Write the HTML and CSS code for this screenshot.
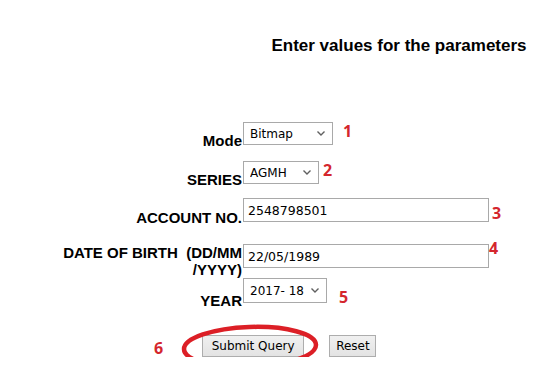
FILE: index.html
```html
<!DOCTYPE html>
<html lang="en">
  <head>
    <meta charset="UTF-8" />
    <title>Enter values for the parameters</title>
    <link rel="stylesheet" href="styles.css">
  </head>
  <body>
    <form class="params" name="paramForm" onsubmit="return false">
      <h3 class="title">Enter values for the parameters</h3>

      <div class="row row-mode">
        <label class="label" for="mode">Mode</label>
        <span class="pick pick-mode">
          <select id="mode" name="mode">
            <option>Bitmap</option>
            <option>PDF</option>
          </select>
          <svg class="chev" width="8" height="5" viewBox="0 0 8 5"><path d="M0.5 0.5 L4 4 L7.5 0.5" /></svg>
        </span>
        <span class="mark mark-1">1</span>
      </div>

      <div class="row row-series">
        <label class="label" for="series">SERIES</label>
        <span class="pick pick-series">
          <select id="series" name="series">
            <option>AGMH</option>
          </select>
          <svg class="chev" width="8" height="5" viewBox="0 0 8 5"><path d="M0.5 0.5 L4 4 L7.5 0.5" /></svg>
        </span>
        <span class="mark mark-2">2</span>
      </div>

      <div class="row row-account">
        <label class="label" for="account">ACCOUNT NO.</label>
        <input class="field" id="account" name="account" type="text" value="2548798501" />
        <span class="mark mark-3">3</span>
      </div>

      <div class="row row-dob">
        <label class="label label-top" for="dob">DATE OF BIRTH&nbsp; (DD/MM<br />/YYYY)</label>
        <input class="field" id="dob" name="dob" type="text" value="22/05/1989" />
        <span class="mark mark-4">4</span>
      </div>

      <div class="row row-year">
        <label class="label" for="year">YEAR</label>
        <span class="pick pick-year">
          <select id="year" name="year">
            <option>2017- 18</option>
            <option>2016- 17</option>
          </select>
          <svg class="chev" width="8" height="5" viewBox="0 0 8 5"><path d="M0.5 0.5 L4 4 L7.5 0.5" /></svg>
        </span>
        <span class="mark mark-5">5</span>
      </div>

      <div class="actions">
        <span class="mark mark-6">6</span>
        <button class="btn btn-submit" type="submit">Submit Query</button>
        <button class="btn btn-reset" type="reset">Reset</button>
        <svg class="ring" width="140" height="46" viewBox="0 0 140 46">
          <ellipse cx="70" cy="23" rx="66" ry="20" transform="rotate(-2 70 23)" />
        </svg>
      </div>
    </form>
  </body>
</html>
```

FILE: styles.css
```css
body {
  margin: 0;
  background: #ffffff;
  font-family: 'Liberation Sans', Arial, sans-serif;
  color: #000000;
}
.params {
  display: flex;
  flex-direction: column;
  width: 556px;
}
.title {
  margin: 36px 0 0 242px;
  width: 314px;
  text-align: center;
  font-size: 17px;
  line-height: 19px;
  font-weight: bold;
}
.row {
  display: flex;
  align-items: flex-start;
}
.label {
  flex: 0 0 242px;
  align-self: flex-end;
  margin-bottom: -4px;
  text-align: right;
  font-size: 15px;
  line-height: 17px;
  font-weight: bold;
  white-space: nowrap;
}
.label-top {
  align-self: flex-start;
  margin-bottom: 0;
}
.row-mode {
  margin-top: 67px;
}
.row-series {
  margin-top: 16px;
}
.row-account {
  margin-top: 14px;
}
.row-dob {
  margin-top: 22px;
}
.row-year {
  margin-top: 0;
}

.pick {
  position: relative;
  display: block;
  margin-left: 1px;
}
.pick select {
  display: block;
  appearance: none;
  -webkit-appearance: none;
  height: 23px;
  margin: 0;
  padding: 0 0 0 6px;
  border: 1px solid #a9a9a9;
  border-radius: 0;
  background: #ffffff;
  font-family: 'DejaVu Sans', Tahoma, sans-serif;
  font-size: 12px;
  color: #000000;
}
.pick-mode select {
  width: 90px;
}
.pick-series select {
  width: 76px;
}
.pick-year select {
  width: 84px;
  height: 25px;
}
.chev {
  position: absolute;
  right: 8px;
  top: 9px;
  pointer-events: none;
}
.pick-year .chev {
  top: 10px;
}
.chev path {
  fill: none;
  stroke: #606060;
  stroke-width: 1.4;
}

.field {
  display: block;
  box-sizing: border-box;
  width: 246px;
  height: 24px;
  margin: 0 0 0 1px;
  padding: 0 0 0 4px;
  border: 1px solid #a9a9a9;
  border-radius: 0;
  font-family: 'DejaVu Sans', Tahoma, sans-serif;
  font-size: 12.5px;
  color: #000000;
}

.mark {
  font-family: 'Open Sans', 'DejaVu Sans', sans-serif;
  font-size: 16px;
  line-height: 16px;
  font-weight: bold;
  color: #d4262d;
}
.mark-1 {
  margin: 1px 0 0 10px;
}
.mark-2 {
  margin: 1px 0 0 4px;
}
.mark-3 {
  margin: 7px 0 0 3px;
}
.mark-4 {
  margin: -4px 0 0 0;
}
.mark-5 {
  margin: 11px 0 0 12px;
}

.actions {
  position: relative;
  display: flex;
  align-items: flex-start;
  margin-top: 30px;
  padding-left: 154px;
}
.mark-6 {
  margin-top: 5px;
}
.btn {
  height: 22px;
  margin: 0;
  padding: 0 6px;
  border: 1px solid #adadad;
  border-radius: 0;
  background: linear-gradient(#f0f0f0, #e3e3e3);
  font-family: 'DejaVu Sans', Tahoma, sans-serif;
  font-size: 12px;
  color: #000000;
}
.btn-submit {
  width: 102px;
  margin-left: 39px;
}
.btn-reset {
  width: 47px;
  margin-left: 25px;
}
.ring {
  position: absolute;
  left: 180px;
  top: -11px;
  pointer-events: none;
}
.ring ellipse {
  fill: none;
  stroke: #dc1f26;
  stroke-width: 4.5;
}
```
